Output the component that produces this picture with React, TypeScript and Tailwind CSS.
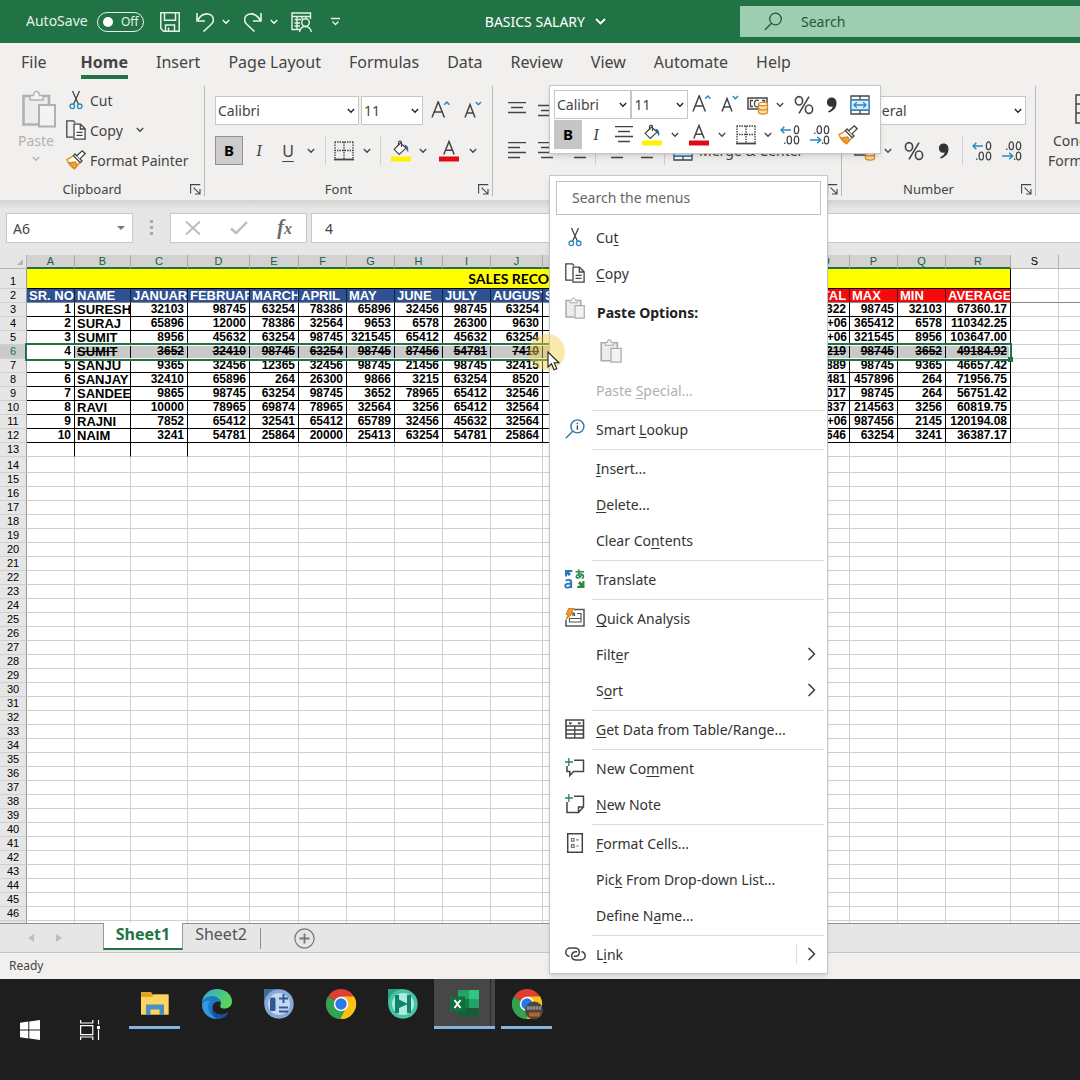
import { Fragment, type ReactNode } from 'react'
import clsx from 'clsx'

/* ---------- Data ---------- */

const TABS = [
  'File',
  'Home',
  'Insert',
  'Page Layout',
  'Formulas',
  'Data',
  'Review',
  'View',
  'Automate',
  'Help',
]

const COLUMNS = [
  { id: 'A', width: 'w-[48px]', title: 'SR. NO' },
  { id: 'B', width: 'w-[56px]', title: 'NAME' },
  { id: 'C', width: 'w-[57px]', title: 'JANUARY' },
  { id: 'D', width: 'w-[62px]', title: 'FEBRUARY' },
  { id: 'E', width: 'w-[49px]', title: 'MARCH' },
  { id: 'F', width: 'w-[48px]', title: 'APRIL' },
  { id: 'G', width: 'w-[48px]', title: 'MAY' },
  { id: 'H', width: 'w-[48px]', title: 'JUNE' },
  { id: 'I', width: 'w-[48px]', title: 'JULY' },
  { id: 'J', width: 'w-[52px]', title: 'AUGUST' },
  { id: 'K', width: 'w-[65px]', title: 'SEPTEMBER' },
  { id: 'L', width: 'w-[65px]', title: 'OCTOBER' },
  { id: 'M', width: 'w-[65px]', title: 'NOVEMBER' },
  { id: 'N', width: 'w-[64px]', title: 'DECEMBER' },
  { id: 'O', width: 'w-[48px]', title: 'TOTAL' },
  { id: 'P', width: 'w-[48px]', title: 'MAX' },
  { id: 'Q', width: 'w-[48px]', title: 'MIN' },
  { id: 'R', width: 'w-[65px]', title: 'AVERAGE' },
]

const EMPTY = ['', '', '', '']

const RECORDS = [
  ['1', 'SURESH', '32103', '98745', '63254', '78386', '65896', '32456', '98745', '63254', ...EMPTY, '808322', '98745', '32103', '67360.17'],
  ['2', 'SURAJ', '65896', '12000', '78386', '32564', '9653', '6578', '26300', '9630', ...EMPTY, '1.3E+06', '365412', '6578', '110342.25'],
  ['3', 'SUMIT', '8956', '45632', '63254', '98745', '321545', '65412', '45632', '63254', ...EMPTY, '1.2E+06', '321545', '8956', '103647.00'],
  ['4', 'SUMIT', '3652', '32410', '98745', '63254', '98745', '87456', '54781', '7410', ...EMPTY, '590219', '98745', '3652', '49184.92'],
  ['5', 'SANJU', '9365', '32456', '12365', '32456', '98745', '21456', '98745', '32415', ...EMPTY, '559889', '98745', '9365', '46657.42'],
  ['6', 'SANJAY', '32410', '65896', '264', '26300', '9866', '3215', '63254', '8520', ...EMPTY, '863481', '457896', '264', '71956.75'],
  ['7', 'SANDEEP', '9865', '98745', '63254', '98745', '3652', '78965', '65412', '32546', ...EMPTY, '681017', '98745', '264', '56751.42'],
  ['8', 'RAVI', '10000', '78965', '69874', '78965', '32564', '3256', '65412', '32564', ...EMPTY, '729837', '214563', '3256', '60819.75'],
  ['9', 'RAJNI', '7852', '65412', '32541', '65412', '65789', '32456', '45632', '32564', ...EMPTY, '1.4E+06', '987456', '2145', '120194.08'],
  ['10', 'NAIM', '3241', '54781', '25864', '20000', '25413', '63254', '54781', '25864', ...EMPTY, '436646', '63254', '3241', '36387.17'],
]

const SELECTED_ROW = 6
const BLANK_ROWS = Array.from({ length: 35 }, (_, i) => i + 13)

type MenuEntry = {
  // label split around its access key
  label: [string, string, string]
  icon?: ReactNode
  submenu?: boolean
  split?: boolean
}

/* ---------- Icons ---------- */

function Chevron({ className = 'text-[#444]' }: { className?: string }) {
  return (
    <svg className={clsx('shrink-0', className)} width="8" height="6" viewBox="0 0 8 6" fill="none" stroke="currentColor" strokeWidth="1.3">
      <path d="M.8 1 4 4.3 7.2 1" />
    </svg>
  )
}

function ChevronRight() {
  return (
    <svg width="9" height="14" viewBox="0 0 9 14" fill="none" stroke="#333" strokeWidth="1.4">
      <path d="M1.5 1 7.5 7l-6 6" />
    </svg>
  )
}

function CutIcon() {
  return (
    <svg width="20" height="20" viewBox="0 0 20 20" fill="none" strokeWidth="1.3">
      <path d="M6.5 1 12.3 14M13.5 1 7.7 14" stroke="#444" />
      <circle cx="6.3" cy="16.3" r="2.3" stroke="#2b88c0" />
      <circle cx="13.7" cy="16.3" r="2.3" stroke="#2b88c0" />
    </svg>
  )
}

function CopyIcon() {
  return (
    <svg width="20" height="20" viewBox="0 0 20 20" fill="none" stroke="#444" strokeWidth="1.3">
      <path d="M7 17.2H.8V.9h6.6l1.8 2" />
      <path d="M8 4.2h6.5l4.6 4.6v10.3H8z" fill="#fbfbfb" />
      <path d="M14.3 4.4v4.6h4.6M10.6 12.4h6M10.6 15.4h6" />
    </svg>
  )
}

function PasteIcon({ className }: { className: string }) {
  return (
    <svg className={className} viewBox="0 0 34 38" fill="none" stroke="currentColor" strokeWidth="1.6">
      <path d="M27 14V6H1.500v28.500H16V14z" fill="#ececec" stroke="none" />
      <path d="M8 6H1.500v28.500H16M20 6h7v8" strokeWidth="2.600" />
      <path d="M8 10V5.500h3.500C11.500 3 13 1.200 14.500 1.200S17.500 3 17.500 5.500H21V10z" fill="#f4f4f4" />
      <path d="M17 15h16v21.500H17z" fill="#f3f3f3" strokeWidth="2" />
    </svg>
  )
}

function PainterIcon() {
  return (
    <svg width="20" height="20" viewBox="0 0 20 20" fill="none" strokeWidth="1.3">
      <path d="M1 9.600 7.800 5.800l6.300 6.400L8.600 18.800C5 17 2.500 13.500 1 9.600z" fill="#fff" stroke="#dd8a1f" />
      <path d="m2.600 13 7-1 1.800 3.400-3 3.200z" fill="#eda13b" stroke="#dd8a1f" />
      <path d="M7.300 5.600 9 4l7 7-1.700 1.600z" fill="#fff" stroke="#444" />
      <path d="m10.800 5.800 5.500-5 2.900 2.900-5.300 5.200" fill="#fff" stroke="#444" />
    </svg>
  )
}

function BordersIcon() {
  return (
    <svg width="20" height="20" viewBox="0 0 20 20" fill="none" stroke="#444">
      <path d="M.5 1h19M.5 9.500h19M1 1v17M10 1v17M19 1v17" strokeDasharray="1.500 1" strokeWidth="1.300" />
      <path d="M0 18.500h20" strokeWidth="1.800" />
    </svg>
  )
}

function FillIcon() {
  return (
    <svg width="20" height="22" viewBox="0 0 20 22" fill="none">
      <path d="M9.500 3 3.200 9.300l5 5.200 6.800-6.400z" fill="#fff" stroke="#444" strokeWidth="1.200" />
      <path d="M7.500 6V2.800C7.500.6 10.500.6 10.500 2.800V7" stroke="#444" strokeWidth="1.200" />
      <path d="M13 4.800c3.500.2 4.800 2.600 4.200 7.200-1.400-.8-1.800-3.300-2.400-4.300z" fill="#2f5f9e" />
      <path d="M0 16.500h20v5H0z" fill="#fff200" />
    </svg>
  )
}

function FontColorIcon() {
  return (
    <svg width="20" height="22" viewBox="0 0 20 22" fill="none">
      <path d="m4.800 14.500 5.200-13 5.200 13M6.600 10.200h6.800" stroke="#444" strokeWidth="1.500" />
      <path d="M0 16.500h20v5H0z" fill="#e00b12" />
    </svg>
  )
}

function FontSizeIcon({ grow }: { grow?: boolean }) {
  return grow ? (
    <svg width="20" height="20" viewBox="0 0 20 20" fill="none">
      <path d="M1 16.500 7.200.8 13.400 16.500M3.200 11h8" stroke="#444" strokeWidth="1.500" />
      <path d="m13.200 3.800 2.600-2.700 2.600 2.700" stroke="#2b88c0" strokeWidth="1.500" />
    </svg>
  ) : (
    <svg width="20" height="20" viewBox="0 0 20 20" fill="none">
      <path d="M2 16.500 7 3.500l5 13M3.800 12h6.400" stroke="#444" strokeWidth="1.500" />
      <path d="m12.800 1 2.600 2.700L18 1" stroke="#2b88c0" strokeWidth="1.500" />
    </svg>
  )
}

function AlignIcon({ lines }: { lines: string }) {
  return (
    <svg width="18" height="18" viewBox="0 0 18 18" fill="none" stroke="#444" strokeWidth="1.300">
      <path d={lines} />
    </svg>
  )
}

const ALIGN_TOP = 'M0 .7h18M3 5.500h12M0 10.500h18'
const ALIGN_MIDDLE = 'M0 3.500h18M3 8.500h12M0 13.500h18'
const ALIGN_LEFT = 'M0 .7h18M0 5.500h12M0 10.500h18M0 15.500h12'
const ALIGN_CENTER = 'M0 .7h18M3 5.500h12M0 10.500h18M3 15.500h12'
const ALIGN_RIGHT = 'M0 .7h18M6 5.500h12M0 10.500h18M6 15.500h12'

function MoneyIcon() {
  return (
    <svg width="22" height="20" viewBox="0 0 22 20" fill="none">
      <path d="M1 3h19v11H1z" stroke="#444" strokeWidth="1.500" fill="#fff" />
      <path d="M6 5.500H3.500v6H6M12 5.500C8.500 4.500 7.500 6 7.500 8.500s1 4 3.500 3.200M15 5.500h2.500V8" stroke="#444" strokeWidth="1.300" />
      <path d="M11.500 9v8.300c0 2.300 9 2.300 9 0V9z" fill="#fbdcb0" stroke="#dd8a1f" strokeWidth="1.300" />
      <ellipse cx="16" cy="9" rx="4.500" ry="1.700" fill="#fff" stroke="#dd8a1f" strokeWidth="1.300" />
      <path d="M11.500 13.200c0 2.300 9 2.300 9 0" stroke="#dd8a1f" strokeWidth="1.300" />
    </svg>
  )
}

function PercentIcon() {
  return (
    <svg width="20" height="20" viewBox="0 0 20 20" fill="none" stroke="#444" strokeWidth="1.600">
      <ellipse cx="5" cy="5.800" rx="3.600" ry="4.200" />
      <ellipse cx="15" cy="14.200" rx="3.600" ry="4.200" />
      <path d="M15 1.600 5 18.400" />
    </svg>
  )
}

function CommaIcon() {
  return (
    <svg width="12" height="18" viewBox="0 0 12 18">
      <path d="M5.600 1.500c3 0 4.900 2.100 4.900 5.400 0 4.600-2.800 8-7.800 9.600l-.6-1.300c2.700-1.100 4.200-2.700 4.600-4.700-3.500.7-5.800-1.200-5.800-4.300 0-2.700 2-4.700 4.700-4.700z" fill="#333" />
    </svg>
  )
}

function DecimalIcon({ increase }: { increase?: boolean }) {
  return (
    <svg width="20" height="20" viewBox="0 0 20 20" fill="none" stroke="#444" strokeWidth="1.300">
      {increase ? (
        <>
          <ellipse cx="16.500" cy="4.800" rx="2.200" ry="3.900" />
          <ellipse cx="9.300" cy="15" rx="2.200" ry="3.900" />
          <ellipse cx="16.500" cy="15" rx="2.200" ry="3.900" />
          <path d="M4.800 17.600v1.400" />
          <path d="M11 5H1M4.300 1.800 1 5l3.300 3.200" stroke="#2b88c0" strokeWidth="1.500" />
        </>
      ) : (
        <>
          <ellipse cx="9.300" cy="4.800" rx="2.200" ry="3.900" />
          <ellipse cx="16.500" cy="4.800" rx="2.200" ry="3.900" />
          <ellipse cx="16.500" cy="15" rx="2.200" ry="3.900" />
          <path d="M4.800 7.600V9M12.600 17.600v1.400" />
          <path d="M0 15h10.500M7.300 11.800l3.300 3.200-3.300 3.200" stroke="#2b88c0" strokeWidth="1.500" />
        </>
      )}
    </svg>
  )
}

function MergeIcon() {
  return (
    <svg width="20" height="20" viewBox="0 0 20 20" fill="none" stroke="#444" strokeWidth="1.300">
      <path d="M1 1h18v18H1z" fill="#fff" />
      <path d="M1 5h18M1 15h18M10 1v4M10 15v4" />
      <path d="M1 5h18v10H1z" stroke="#2b88c0" fill="#dcecf7" />
      <path d="M4 10h12M6.800 7.200 4 10l2.800 2.800M13.200 7.200 16 10l-2.800 2.800" stroke="#2b88c0" />
    </svg>
  )
}

function LauncherIcon() {
  return (
    <svg width="11" height="11" viewBox="0 0 11 11" fill="none" stroke="#444" strokeWidth="1.100">
      <path d="M.6 9.500V.6h9.600M3.600 3.600l6 6M10 5v5H5" />
    </svg>
  )
}

function LookupIcon() {
  return (
    <svg width="20" height="20" viewBox="0 0 20 20" fill="none" stroke="#2b78a8" strokeWidth="1.400">
      <circle cx="12.400" cy="7.400" r="6.500" />
      <path d="M7.700 12.200.8 19.200" />
      <path d="M12.400 6.500v4.300M12.400 3.700v1.500" stroke="#444" />
    </svg>
  )
}

function TranslateIcon() {
  return (
    <svg width="22" height="20" viewBox="0 0 22 20" fill="none">
      <path d="M1 1v6.500h2V5.200L5 7l2-2-2-2h3.300V1z" fill="#2b78b8" />
      <path d="M1.800 11.800c1.800-1.400 5.400-1.300 5.400 1.400V19M7.200 14.500c-3.500 0-6 .2-6 2.200 0 2.600 4.600 2.600 6-.2" stroke="#2b78b8" strokeWidth="1.900" />
      <path d="M11.500 2.800h8.500M14.800.3c-.4 3.500-.2 6 .8 8.700M18 4.500c-1 3-3 4.800-4.800 4.500-2.300-.6-.2-4.100 3.200-3.900 3.900.2 3.800 3.800 1.200 4.400" stroke="#2a8a3e" strokeWidth="1.500" />
      <path d="M20.500 19v-7h-2.200v2.500L16 12.300l-2 2 2.300 2.500h-3V19z" fill="#2a8a3e" />
    </svg>
  )
}

function AnalysisIcon() {
  return (
    <svg width="20" height="20" viewBox="0 0 20 20" fill="none">
      <path d="M9 1.500h10V18H1v-6" stroke="#555" strokeWidth="1.500" />
      <path d="M8 8V5.500h1.500V8M4.500 10.500H16V14H4.500zM12 5.500h4v5" stroke="#555" strokeWidth="1.200" />
      <path d="M3.500.5H9L6.500 4.500h2.300L1 11.500 3.200 6.500H1z" fill="#ee9a35" stroke="#c96f12" strokeWidth=".8" />
    </svg>
  )
}

function TableDataIcon() {
  return (
    <svg width="20" height="20" viewBox="0 0 20 20" fill="none" stroke="#444" strokeWidth="1.300">
      <path d="M1 1h17.500v18H1z" strokeWidth="1.600" />
      <path d="M1 7h17.500M1 11h17.500M1 15h17.500M9.800 7v12" />
      <path d="m4 3.500 1.300 1.300L6.600 3.500M13 3.500l1.300 1.300 1.300-1.300" />
    </svg>
  )
}

function CommentIcon() {
  return (
    <svg width="20" height="20" viewBox="0 0 20 20" fill="none" stroke="#444" strokeWidth="1.500">
      <path d="M9 2.200h9.500v11.300H8.500l-3.700 4v-4H2V8" />
      <path d="M3.800 0v8M0 4h8" stroke="#2f7f6a" strokeWidth="1.300" />
    </svg>
  )
}

function NoteIcon() {
  return (
    <svg width="20" height="20" viewBox="0 0 20 20" fill="none" stroke="#444" strokeWidth="1.500">
      <path d="M9 2.200h9.500V13l-5 5.500H2V8M18.500 13h-5v5.500" />
      <path d="M3.800 0v8M0 4h8" stroke="#2f7f6a" strokeWidth="1.300" />
    </svg>
  )
}

function FormatCellsIcon() {
  return (
    <svg width="20" height="20" viewBox="0 0 20 20" fill="none" stroke="#444" strokeWidth="1.500">
      <path d="M2.700.7h14.600v18.600H2.700z" />
      <path d="M6.500 5.500h2.600v2.600H6.500zM6.500 11.700h2.600v2.600H6.500zM11.200 6.800h2.600M11.200 13h2.600" stroke="#777" strokeWidth="1.200" />
    </svg>
  )
}

function LinkIcon() {
  return (
    <svg width="21" height="16" viewBox="0 0 21 16" fill="none" stroke="#444" strokeWidth="1.500">
      <path d="M4.500 10.500C2.300 9.800.8 8.300.8 6.200.8 3.800 2.800 2 5.500 2h4c2.800 0 4.800 1.700 4.800 4.200 0 2.400-1.800 4-4 4H8.800" />
      <path d="M16.500 5.500c2.200.7 3.700 2.200 3.700 4.300 0 2.400-2 4.200-4.700 4.200h-4c-2.800 0-4.800-1.700-4.800-4.200 0-2.400 1.800-4 4-4h1.500" />
    </svg>
  )
}

function ChromeIcon({ badge }: { badge?: boolean }) {
  return (
    <svg width="32" height="32" viewBox="0 0 32 32">
      <path d="M16 16 3 8.500A15 15 0 0 1 29 8.500z" fill="#df3e32" />
      <path d="M16 16 29 8.500A15 15 0 0 1 16 31z" fill="#fbc116" />
      <path d="M16 16v15A15 15 0 0 1 3 8.500z" fill="#33a350" />
      <path d="M16 8.500h13A15 15 0 0 1 15.500 31l7-11.500z" fill="#fbc116" />
      <path d="m3 8.500 7 12 6 2.200 4-1L15.500 31A15 15 0 0 1 3 8.500z" fill="#33a350" />
      <circle cx="16" cy="16" r="7.200" fill="#fff" />
      <circle cx="16" cy="16" r="5.700" fill="#2d76ea" />
      {badge && (
        <>
          <circle cx="23" cy="22.500" r="9" fill="#4a4646" />
          <path d="M16 20h14" stroke="#8d8d8d" strokeWidth="3.500" strokeDasharray="2.500 .5" />
          <path d="M18 24.500h11v4H18z" fill="#b5651f" />
        </>
      )}
    </svg>
  )
}

/* ---------- Title bar ---------- */

function TitleBar() {
  return (
    <header className="flex h-[43px] shrink-0 items-center bg-[#217346] text-[14px] text-[#e3f3e8]">
      <div className="flex w-[740px] shrink-0 items-center">
        <span className="ml-[26px] w-[71px] pb-[2px]">AutoSave</span>
        <button className="flex h-5 w-[47px] items-center gap-2 rounded-full border border-white/90 pl-[5px] text-[12px]">
          <span className="size-[10px] rounded-full bg-white" />
          Off
        </button>
        <button aria-label="Save" className="ml-4">
          <svg width="20" height="20" viewBox="0 0 20 20" fill="none" stroke="currentColor" strokeWidth="1.500">
            <path d="M.8.8h18.400v18.400H3.500L.8 16.500zM4.500.8v7.500h11V.8M5.500 19v-6h9v6M8.500 15.500V19" />
          </svg>
        </button>
        <button aria-label="Undo" className="ml-4">
          <svg width="18" height="20" viewBox="0 0 18 20" fill="none" stroke="currentColor" strokeWidth="1.600">
            <path d="M1 1v8h8M1.300 8.800C4 4 8 1.500 12 2c5.500.8 7 6.500 3.500 10L7.500 19.500" />
          </svg>
        </button>
        <button aria-label="Undo list" className="ml-2">
          <Chevron className="text-white" />
        </button>
        <button aria-label="Redo" className="ml-[14px]">
          <svg width="18" height="20" viewBox="0 0 18 20" fill="none" stroke="currentColor" strokeWidth="1.600">
            <path d="M17 1v8H9M16.700 8.800C14 4 10 1.500 6 2 .5 2.800-1 8.500 2.500 12l8 7.500" />
          </svg>
        </button>
        <button aria-label="Redo list" className="ml-2">
          <Chevron className="text-white" />
        </button>
        <button aria-label="Table view" className="ml-[13px]">
          <svg width="22" height="22" viewBox="0 0 22 22" fill="none" stroke="currentColor" strokeWidth="1.400">
            <path d="M9 18.500H1V2h18.500v6M1 5.500h18.500M3.500 8.500H10M3.500 12H9M3.500 15H9M6 5.500v13M11 5.500v3M15 5.500v2" />
            <circle cx="14.500" cy="11.500" r="3.800" />
            <path d="M8.500 21c.5-3.500 3-5.500 6-5.500s5 2 6 5.500" />
          </svg>
        </button>
        <button aria-label="Customize toolbar" className="ml-[17px]">
          <svg width="11" height="10" viewBox="0 0 11 10" fill="none" stroke="currentColor" strokeWidth="1.300">
            <path d="M1 1.500h9M2.500 4.500l3 3 3-3" />
          </svg>
        </button>
        <button className="mr-[134px] ml-auto flex items-center gap-[10px] text-white">
          BASICS SALARY
          <svg width="11" height="7" viewBox="0 0 11 7" fill="none" stroke="currentColor" strokeWidth="1.800">
            <path d="m1 1 4.500 4.500L10 1" />
          </svg>
        </button>
      </div>
      <label className="flex h-[31px] flex-1 items-center bg-[#9fcdb1] pl-6 text-[#1c5c38]">
        <svg className="shrink-0" width="19" height="19" viewBox="0 0 19 19" fill="none" stroke="currentColor" strokeWidth="1.300">
          <circle cx="11.500" cy="7" r="5.800" />
          <path d="M7.500 11.200.8 18" />
        </svg>
        <input
          aria-label="Search"
          placeholder="Search"
          className="ml-[18px] w-full bg-transparent outline-none placeholder:text-[#1c5c38]"
        />
      </label>
    </header>
  )
}

/* ---------- Ribbon ---------- */

function RibbonTabs() {
  return (
    <nav className="flex h-9 shrink-0 gap-7 pl-[21px] text-[16px] text-[#444]">
      {TABS.map((tab) => (
        <button
          key={tab}
          className={clsx(
            'h-9 border-b-4 pt-[5px] whitespace-nowrap',
            tab === 'Home' ? 'border-[#217346] font-bold' : 'border-transparent',
            tab === 'File' && 'mr-[6px]',
          )}
        >
          {tab}
        </button>
      ))}
    </nav>
  )
}

function Group({ label, className, children }: { label: string; className?: string; children: ReactNode }) {
  return (
    <section className={clsx('relative flex shrink-0 flex-col border-r border-[#b8b8b8]', className)}>
      {children}
      <div className="mt-auto pr-5 text-center text-[13px] leading-[13px]">{label}</div>
      <button aria-label={`${label} settings`} className="absolute right-[3px] bottom-px">
        <LauncherIcon />
      </button>
    </section>
  )
}

function ComboBox({ label, value, className }: { label: string; value: string; className: string }) {
  return (
    <div className={clsx('relative h-[29px] border border-[#c6c6c6] bg-white', className)}>
      <select aria-label={label} className="h-full w-full appearance-none pl-[2px] text-[14px] text-[#444] outline-none">
        <option>{value}</option>
      </select>
      <span className="pointer-events-none absolute top-[11px] right-[3px]">
        <Chevron className="text-[#222]" />
      </span>
    </div>
  )
}

function Tool({ label, className, children }: { label: string; className: string; children: ReactNode }) {
  return (
    <button aria-label={label} className={clsx('flex h-[29px] shrink-0 items-center justify-center', className)}>
      {children}
    </button>
  )
}

function Divider() {
  return <span className="mx-1 h-[29px] w-px bg-[#d0d0d0]" />
}

function Ribbon() {
  return (
    <div className="flex h-[121px] shrink-0 overflow-hidden pt-[7px] pb-[4px] text-[14px] text-[#444]">
      <Group label="Clipboard" className="w-[205px]">
        <div className="flex">
          <button className="ml-4 flex w-10 flex-col items-center text-[#b1b1b1]">
            <PasteIcon className="mt-1 ml-[5px] h-[38px] w-[34px]" />
            <span className="mt-[3px] leading-[19px]">Paste</span>
            <Chevron className="mt-[6px] text-[#b1b1b1]" />
          </button>
          <div className="ml-[10px] flex flex-col">
            <button className="flex h-[30px] items-center gap-1 pb-[2px]">
              <CutIcon /> Cut
            </button>
            <button className="flex h-[30px] items-center gap-1 pb-[2px]">
              <CopyIcon /> Copy <Chevron className="ml-[9px] text-[#444]" />
            </button>
            <button className="flex h-[30px] items-center gap-1 pb-[2px] whitespace-nowrap">
              <PainterIcon /> Format Painter
            </button>
          </div>
        </div>
      </Group>

      <Group label="Font" className="w-[288px]">
        <div className="flex pt-[10px] pl-[10px]">
          <ComboBox label="Font" value="Calibri" className="w-[144px]" />
          <ComboBox label="Font size" value="11" className="ml-[2px] w-[62px]" />
          <Tool label="Increase font size" className="ml-[2px] w-8">
            <FontSizeIcon grow />
          </Tool>
          <Tool label="Decrease font size" className="w-8">
            <FontSizeIcon />
          </Tool>
        </div>
        <div className="flex pt-[11px] pl-[10px]">
          <Tool label="Bold" className="w-7 border border-[#919191] bg-[#cdcccb] text-[15px] font-bold text-black">
            B
          </Tool>
          <Tool label="Italic" className="w-8 font-serif text-[17px] italic">
            I
          </Tool>
          <Tool label="Underline" className="w-[26px] text-[16px] underline underline-offset-4">
            U
          </Tool>
          <Tool label="Underline style" className="w-5">
            <Chevron />
          </Tool>
          <Divider />
          <Tool label="Borders" className="w-7">
            <BordersIcon />
          </Tool>
          <Tool label="Border style" className="w-[18px]">
            <Chevron />
          </Tool>
          <Divider />
          <Tool label="Fill color" className="w-8">
            <FillIcon />
          </Tool>
          <Tool label="Fill color list" className="w-3">
            <Chevron />
          </Tool>
          <Tool label="Font color" className="w-10">
            <FontColorIcon />
          </Tool>
          <Tool label="Font color list" className="w-2">
            <Chevron />
          </Tool>
        </div>
      </Group>

      <Group label="Alignment" className="w-[349px]">
        <div className="flex pt-[10px] pl-[10px]">
          <Tool label="Top align" className="w-7">
            <AlignIcon lines={ALIGN_TOP} />
          </Tool>
          <Tool label="Middle align" className="w-8">
            <AlignIcon lines={ALIGN_MIDDLE} />
          </Tool>
        </div>
        <div className="flex pt-[11px] pl-[10px]">
          <Tool label="Align left" className="w-7">
            <AlignIcon lines={ALIGN_LEFT} />
          </Tool>
          <Tool label="Center" className="w-8">
            <AlignIcon lines={ALIGN_CENTER} />
          </Tool>
          <Tool label="Align right" className="w-7">
            <AlignIcon lines={ALIGN_RIGHT} />
          </Tool>
          <Divider />
          <Tool label="Decrease indent" className="w-7">
            <AlignIcon lines={ALIGN_RIGHT} />
          </Tool>
          <Tool label="Increase indent" className="w-8">
            <AlignIcon lines={ALIGN_RIGHT} />
          </Tool>
          <Divider />
          <button className="flex h-[29px] items-center gap-[6px] pl-1 whitespace-nowrap">
            <MergeIcon /> Merge &amp; Center
          </button>
        </div>
      </Group>

      <Group label="Number" className="w-[194px]">
        <div className="flex pt-[10px] pl-[10px]">
          <ComboBox label="Number format" value="General" className="w-[174px]" />
        </div>
        <div className="flex pt-[11px] pl-[10px]">
          <Tool label="Accounting format" className="w-[26px]">
            <MoneyIcon />
          </Tool>
          <Tool label="Accounting format list" className="w-5">
            <Chevron />
          </Tool>
          <Tool label="Percent style" className="w-8">
            <PercentIcon />
          </Tool>
          <Tool label="Comma style" className="w-7">
            <CommaIcon />
          </Tool>
          <Divider />
          <Tool label="Increase decimal" className="w-[30px]">
            <DecimalIcon increase />
          </Tool>
          <Tool label="Decrease decimal" className="w-[30px]">
            <DecimalIcon />
          </Tool>
        </div>
      </Group>

      <button className="ml-3 flex shrink-0 flex-col items-center pt-2 leading-5 whitespace-nowrap">
        <svg width="32" height="30" viewBox="0 0 32 30" fill="none" stroke="#444" strokeWidth="1.500">
          <path d="M1 1h30v28H1zM1 10h30M1 19h30M11 1v28" />
        </svg>
        <span className="mt-[7px]">Conditional</span>
        <span className="flex items-center gap-1">
          Formatting <Chevron />
        </span>
      </button>
    </div>
  )
}

function FormulaBar() {
  return (
    <div className="flex h-[55px] shrink-0 items-end bg-linear-to-b from-[#d3d3d1] from-0% to-[#e6e6e6] to-15% pb-3 text-[14px] text-[#444]">
      <label className="relative ml-[6px] h-[30px] w-[127px] border border-[#c8c8c8] bg-white">
        <input aria-label="Name box" defaultValue="A6" className="h-full w-full px-[6px] outline-none" />
        <span className="absolute top-3 right-[7px] border-x-4 border-t-4 border-x-transparent border-t-[#777]" />
      </label>
      <span className="mx-[17px] mb-2 flex flex-col gap-[3px]">
        <i className="size-[3px] bg-[#a8a8a8]" />
        <i className="size-[3px] bg-[#a8a8a8]" />
        <i className="size-[3px] bg-[#a8a8a8]" />
      </span>
      <div className="flex h-[30px] w-[137px] items-center justify-between border border-[#c8c8c8] bg-white px-[14px]">
        <button aria-label="Cancel">
          <svg width="16" height="14" viewBox="0 0 16 14" fill="none" stroke="#b9b9b9" strokeWidth="1.800">
            <path d="M1 .5 15 13.500M15 .5 1 13.500" />
          </svg>
        </button>
        <button aria-label="Enter">
          <svg width="18" height="14" viewBox="0 0 18 14" fill="none" stroke="#bdbdbd" strokeWidth="2.400">
            <path d="m1 7.500 5 4.500L17 1" />
          </svg>
        </button>
        <button className="font-['Liberation_Serif',serif] text-[20px] leading-6 font-bold text-[#6a6a6a] italic">
          f<span className="text-[16px]">x</span>
        </button>
      </div>
      <input
        aria-label="Formula"
        defaultValue="4"
        className="ml-1 h-[30px] flex-1 border border-r-0 border-[#c8c8c8] bg-white pl-[13px] outline-none"
      />
    </div>
  )
}

/* ---------- Worksheet ---------- */

const ROW_HEAD = 'border-r border-b border-r-[#9a9a9a] border-b-[#cfcfcf] p-0 text-center align-bottom text-[11px] leading-[13px] font-normal'

function Sheet() {
  return (
    <main className="min-h-0 flex-1 overflow-hidden bg-white">
      <table className="w-full table-fixed border-separate border-spacing-0 font-['Liberation_Sans',sans-serif] text-black">
        <colgroup>
          <col className="w-[27px]" />
          {COLUMNS.map((col) => (
            <col key={col.id} className={col.width} />
          ))}
          <col className="w-[48px]" />
          <col />
        </colgroup>
        <thead>
          <tr className="bg-[#e6e6e6] text-[11px] leading-[12px]">
            <th className="h-[14px] border-r border-b border-[#b5b5b5] p-0">
              <span className="mr-[3px] ml-auto block w-0 border-b-[6px] border-l-[6px] border-b-[#b5b5b5] border-l-transparent" />
            </th>
            {COLUMNS.map((col) => (
              <th key={col.id} className="h-[14px] border-r border-b-2 border-r-[#aaa] border-b-[#217346] bg-[#d2d2d2] p-0 font-normal text-[#22593f]">
                {col.id}
              </th>
            ))}
            <th className="h-[14px] border-r border-b border-[#b0b0b0] p-0 align-top font-normal">S</th>
            <th className="h-[14px] border-b border-[#b0b0b0] p-0 font-normal" />
          </tr>
        </thead>
        <tbody>
          <tr>
            <th className={clsx(ROW_HEAD, 'h-5 bg-[#e6e6e6]')}>1</th>
            <td colSpan={18} className="h-5 border-r border-b border-black bg-[#ffff00] p-0 text-center font-['Lato',sans-serif] text-[14px] leading-[19px] font-bold">
              SALES RECORD
            </td>
            <td className="border-r border-b border-[#cfcfcf] p-0" />
            <td className="border-b border-[#cfcfcf] p-0" />
          </tr>
          <tr>
            <th className={clsx(ROW_HEAD, 'h-[14px] bg-[#e6e6e6]')}>2</th>
            {COLUMNS.map((col, i) => (
              <td
                key={col.id}
                className={clsx(
                  'overflow-hidden border-r border-b border-r-black/60 border-b-[#888] p-0 pl-[2px] text-[13px] leading-[13px] font-bold whitespace-nowrap text-white',
                  i < 14 ? 'bg-[#2f5191]' : 'bg-[#f40a0a]',
                )}
              >
                {col.title}
              </td>
            ))}
            <td className="border-r border-b border-r-[#cfcfcf] border-b-[#888] p-0" />
            <td className="border-b border-[#888] p-0" />
          </tr>
          {RECORDS.map((record, r) => {
            const row = r + 3
            const selected = row === SELECTED_ROW
            return (
              <tr key={row}>
                <th className={clsx(ROW_HEAD, 'h-[14px]', selected ? 'bg-[#cacaca] text-[#217346]' : 'bg-[#e6e6e6]')}>{row}</th>
                {record.map((value, i) => (
                  <td
                    key={COLUMNS[i].id}
                    className={clsx(
                      'border-r border-b border-black p-0 leading-[13px] font-bold whitespace-nowrap',
                      i === 1 ? 'pl-[2px] text-[13px]' : 'pr-[3px] text-right text-[12px]',
                      selected && i === 0 ? 'relative' : 'overflow-hidden',
                      selected && i > 0 && 'bg-[#c9c9c9] line-through',
                    )}
                  >
                    {value}
                    {selected && i === 0 && (
                      <span className="absolute -top-[2px] -left-[2px] z-10 h-[18px] w-[987px] border-2 border-[#217346] inset-ring inset-ring-white">
                        <span className="absolute -right-[3px] -bottom-[3px] size-[5px] bg-[#217346]" />
                      </span>
                    )}
                  </td>
                ))}
                <td className="border-r border-b border-[#cfcfcf] p-0" />
                <td className="border-b border-[#cfcfcf] p-0" />
              </tr>
            )
          })}
          {BLANK_ROWS.map((row) => (
            <tr key={row}>
              <th className={clsx(ROW_HEAD, 'bg-[#e6e6e6]', row === 14 ? 'h-4' : 'h-[14px]')}>{row}</th>
              {COLUMNS.map((col, i) => (
                <td
                  key={col.id}
                  className={clsx('border-r border-b border-b-[#cfcfcf] p-0', row === 13 && i < 3 ? 'border-r-black' : 'border-r-[#cfcfcf]')}
                />
              ))}
              <td className="border-r border-b border-[#cfcfcf] p-0" />
              <td className="border-b border-[#cfcfcf] p-0" />
            </tr>
          ))}
        </tbody>
      </table>
    </main>
  )
}

function SheetTabs() {
  return (
    <div className="flex h-[30px] shrink-0 border-t border-b border-t-[#8f8f8f] border-b-[#c4c4c4] bg-[#e6e6e6] text-[16px] leading-5 text-[#555]">
      <div className="flex w-[103px] items-center gap-[22px] pl-7">
        <button aria-label="Previous sheet" className="border-y-4 border-r-[6px] border-y-transparent border-r-[#bdbdbd]" />
        <button aria-label="Next sheet" className="border-y-4 border-l-[6px] border-y-transparent border-l-[#bdbdbd]" />
      </div>
      <button className="-mt-px h-[27px] w-20 border-x border-b-2 border-x-[#9a9a9a] border-b-[#217346] bg-white pb-1 font-bold text-[#217346]">
        Sheet1
      </button>
      <button className="h-5 w-[76px]">Sheet2</button>
      <span className="mt-1 ml-px h-[21px] w-px bg-[#8f8f8f]" />
      <button aria-label="New sheet" className="mt-1 ml-[33px] self-start">
        <svg width="21" height="21" viewBox="0 0 21 21" fill="none" stroke="#777" strokeWidth="1.200">
          <circle cx="10.500" cy="10.500" r="9.600" />
          <path d="M5.500 10.500h10M10.500 5.500v10" strokeWidth="1.800" />
        </svg>
      </button>
    </div>
  )
}

/* ---------- Floating mini toolbar and context menu ---------- */

function MiniToolbar() {
  return (
    <div className="absolute top-[85px] left-[549px] z-20 w-[332px] border border-[#c6c6c6] bg-white p-1 shadow-md">
      <div className="flex">
        <ComboBox label="Font" value="Calibri" className="w-[78px]" />
        <ComboBox label="Font size" value="11" className="w-[57px]" />
        <Tool label="Increase font size" className="w-7">
          <FontSizeIcon grow />
        </Tool>
        <Tool label="Decrease font size" className="w-7">
          <FontSizeIcon />
        </Tool>
        <Tool label="Accounting format" className="w-7">
          <MoneyIcon />
        </Tool>
        <Tool label="Accounting format list" className="w-4">
          <Chevron />
        </Tool>
        <Tool label="Percent style" className="w-8">
          <PercentIcon />
        </Tool>
        <Tool label="Comma style" className="w-6">
          <CommaIcon />
        </Tool>
        <Tool label="Merge and center" className="w-8">
          <MergeIcon />
        </Tool>
      </div>
      <div className="flex pt-px">
        <Tool label="Bold" className="w-7 bg-[#c6c6c6] text-[15px] font-bold text-black">
          B
        </Tool>
        <Tool label="Italic" className="w-7 font-serif text-[17px] text-[#444] italic">
          I
        </Tool>
        <Tool label="Center" className="w-7">
          <AlignIcon lines={ALIGN_CENTER} />
        </Tool>
        <Tool label="Fill color" className="w-7">
          <FillIcon />
        </Tool>
        <Tool label="Fill color list" className="w-[18px]">
          <Chevron />
        </Tool>
        <Tool label="Font color" className="w-[30px]">
          <FontColorIcon />
        </Tool>
        <Tool label="Font color list" className="w-4">
          <Chevron />
        </Tool>
        <Tool label="Borders" className="w-8">
          <BordersIcon />
        </Tool>
        <Tool label="Border style" className="w-3">
          <Chevron />
        </Tool>
        <Tool label="Increase decimal" className="w-8">
          <DecimalIcon increase />
        </Tool>
        <Tool label="Decrease decimal" className="w-7">
          <DecimalIcon />
        </Tool>
        <Tool label="Format painter" className="w-7">
          <PainterIcon />
        </Tool>
      </div>
    </div>
  )
}

const EDIT_ITEMS: MenuEntry[] = [
  { label: ['Cu', 't', ''], icon: <CutIcon /> },
  { label: ['', 'C', 'opy'], icon: <CopyIcon /> },
]

const MENU_SECTIONS: MenuEntry[][] = [
  [{ label: ['Smart ', 'L', 'ookup'], icon: <LookupIcon /> }],
  [{ label: ['', 'I', 'nsert...'] }, { label: ['', 'D', 'elete...'] }, { label: ['Clear Co', 'n', 'tents'] }],
  [{ label: ['Translate', '', ''], icon: <TranslateIcon /> }],
  [
    { label: ['', 'Q', 'uick Analysis'], icon: <AnalysisIcon /> },
    { label: ['Filt', 'e', 'r'], submenu: true },
    { label: ['S', 'o', 'rt'], submenu: true },
  ],
  [{ label: ['', 'G', 'et Data from Table/Range...'], icon: <TableDataIcon /> }],
  [
    { label: ['New Co', 'm', 'ment'], icon: <CommentIcon /> },
    { label: ['', 'N', 'ew Note'], icon: <NoteIcon /> },
  ],
  [
    { label: ['', 'F', 'ormat Cells...'], icon: <FormatCellsIcon /> },
    { label: ['Pic', 'k', ' From Drop-down List...'] },
    { label: ['Define N', 'a', 'me...'] },
  ],
  [{ label: ['L', 'i', 'nk'], icon: <LinkIcon />, submenu: true, split: true }],
]

function MenuItem({ label, icon, submenu, split }: MenuEntry) {
  return (
    <button className="flex h-9 w-full items-center pr-[11px] pb-[3px] pl-[14px] text-left">
      <span className="flex w-[22px] justify-center">{icon}</span>
      <span className="ml-[10px] flex-1 pt-[2px] whitespace-pre">
        {label[0]}
        <span className="underline underline-offset-2">{label[1]}</span>
        {label[2]}
      </span>
      {split && <span className="mr-[10px] h-5 w-px bg-[#ddd]" />}
      {submenu && <ChevronRight />}
    </button>
  )
}

function ContextMenu() {
  return (
    <div className="absolute top-[175px] left-[549px] z-20 w-[279px] border border-[#c6c6c6] bg-white text-[14px] text-[#333] shadow-md">
      <input
        aria-label="Search the menus"
        placeholder="Search the menus"
        className="mx-[6px] my-[5px] block h-[34px] w-[265px] border border-[#c0c0c0] pb-[2px] pl-[15px] outline-none placeholder:text-[#666]"
      />
      {EDIT_ITEMS.map((item) => (
        <MenuItem key={item.label.join('')} {...item} />
      ))}
      <div className="mt-[3px] flex h-9 items-center pb-[2px] pl-[15px] font-bold text-[#222]">
        <PasteIcon className="mb-2 h-[22px] w-5 text-[#aaa]" />
        <span className="ml-3">Paste Options:</span>
      </div>
      <button aria-label="Paste" className="ml-[50px] flex h-[42px] items-center pb-[2px] text-[#aaa]">
        <PasteIcon className="h-6 w-[22px]" />
      </button>
      <button className="flex h-9 w-full items-center pb-px pl-[46px] text-[#b1b1b1]">
        <span>
          Paste <span className="underline underline-offset-2">S</span>pecial...
        </span>
      </button>
      {MENU_SECTIONS.map((items, i) => (
        <Fragment key={i}>
          <hr className="my-px mr-[3px] ml-[42px] border-[#dcdcdc]" />
          {items.map((item) => (
            <MenuItem key={item.label.join('')} {...item} />
          ))}
        </Fragment>
      ))}
    </div>
  )
}

function Pointer() {
  return (
    <div className="pointer-events-none absolute top-[334px] left-[529px] z-30 size-9 rounded-full bg-[#f2cf4a]/45">
      <svg className="absolute top-[17px] left-[18px]" width="14" height="20" viewBox="0 0 14 20">
        <path d="M1 1v15l3.500-3.200L7 18.800l2.800-1.200-2.600-5.800H12z" fill="#fff" stroke="#222" strokeWidth="1.100" />
      </svg>
    </div>
  )
}

/* ---------- Windows taskbar ---------- */

function TaskButton({ label, open, active, children }: { label: string; open?: boolean; active?: boolean; children: ReactNode }) {
  return (
    <button
      aria-label={label}
      className={clsx(
        'relative flex h-[50px] items-center justify-center border-b-3 pt-[3px]',
        active ? 'mr-px w-[61px] bg-[#474747]' : 'mr-[6px] ml-[5px] w-[51px]',
        open ? 'border-[#84b4e0]' : 'border-transparent',
      )}
    >
      {children}
      {active && <span className="absolute inset-y-0 right-1 w-px bg-[#2a2a2a]" />}
    </button>
  )
}

function Taskbar() {
  return (
    <footer className="flex h-[101px] shrink-0 bg-[#1e1e1e]">
      <button aria-label="Start" className="flex w-[60px] items-center justify-center">
        <svg width="20" height="20" viewBox="0 0 20 20" fill="#fff">
          <path d="M0 2.800 8.300 1.600v7.900H0zM9.300 1.500 20 0v9.500H9.300zM0 10.500h8.300v7.900L0 17.200zM9.300 10.500H20V20L9.300 18.500z" />
        </svg>
      </button>
      <button aria-label="Task view" className="mr-1 flex w-[60px] items-center justify-center">
        <svg width="20" height="20" viewBox="0 0 20 20" fill="none" stroke="#fff" strokeWidth="1.200">
          <path d="M.6 5.600h12.200v9H.6zM.6 0v3h12.200V0M.6 20v-3h12.200v3M18.500 0v4.500M18.500 9.500V20" />
          <path d="M17 6h3v3h-3z" fill="#fff" stroke="none" />
        </svg>
      </button>
      <TaskButton label="File Explorer" open>
        <svg width="28" height="24" viewBox="0 0 28 24">
          <path d="M0 0h10l2 2.500h15.500V22.500H0z" fill="#e0a526" />
          <path d="M0 5h11l2-2.500h14.500v20H0z" fill="#fcd462" />
          <path d="M5 23V12.500h18V23h-4.500v-5.500h-9V23z" fill="#4a8fc0" />
        </svg>
      </TaskButton>
      <TaskButton label="Edge">
        <svg width="30" height="30" viewBox="0 0 30 30">
          <defs>
            <linearGradient id="edgeTop" x1="0" x2="1" y1="0" y2=".4">
              <stop offset="0" stopColor="#2aa5e0" />
              <stop offset="1" stopColor="#5bd558" />
            </linearGradient>
          </defs>
          <path d="M0 15C0 6 7 0 15 0c9 0 15 6 15 12.500 0 4.500-3.500 7-7.500 7-3.500 0-5-1.500-4-3.500C20 12 16 7.500 10.500 7.500 5 7.500 1 11 0 15z" fill="url(#edgeTop)" />
          <path d="M0 15c1-4.500 5-7.500 10.500-7.500 4 0 7.500 2 8 5.500-4-2-8 1.500-8 5.500 0 4.500 4.500 8 10 7 2.500-.5 4.500-1.500 6-2.500C24 27.500 20 30 15 30 6.500 30 0 23.500 0 15z" fill="#1b78ca" />
          <path d="M8.500 12c-4 4-3.500 12.500 5.500 17.800C6 29 0 23.500 0 15c1.500-3 5-4 8.500-3z" fill="#3398dc" />
          <path d="M10.500 18.500c0 5 5 8.500 10.500 7 2-.5 4-1.500 5.500-2.500-2.500 4-6 6-9.500 6.800-6-1-8.500-7-6.500-11.300z" fill="#14529b" />
        </svg>
      </TaskButton>
      <TaskButton label="Settings tool">
        <svg width="30" height="30" viewBox="0 0 30 30">
          <path d="M0 0h15v15H0z" fill="#3c6f96" />
          <circle cx="15" cy="15" r="14.700" fill="#88a9d6" />
          <circle cx="15" cy="15" r="11" fill="#c6d7f0" />
          <rect x="6" y="8.500" width="5.500" height="13.500" rx="1.500" fill="#2d5a94" />
          <path d="M15 9.500h9M19.500 5v9M15 18.500h9M15 22.500h9" stroke="#2d5a94" strokeWidth="2" />
        </svg>
      </TaskButton>
      <TaskButton label="Chrome">
        <ChromeIcon />
      </TaskButton>
      <TaskButton label="HitPaw">
        <svg width="30" height="30" viewBox="0 0 30 30">
          <path d="M0 0h15v15H0z" fill="#2aa088" />
          <circle cx="15" cy="15" r="14.700" fill="#45c4a5" />
          <circle cx="15" cy="15" r="11" fill="#a9ecd9" />
          <path d="M7 6h4v18H7zM19 6h4v18h-4zM11 10.500l9 4.500-9 4z" fill="#12806c" />
        </svg>
      </TaskButton>
      <TaskButton label="Excel" open active>
        <svg width="30" height="30" viewBox="0 0 30 30">
          <path d="M8 1h21v27H8z" fill="#185c37" />
          <path d="M8 1h11v9H8z" fill="#21a366" />
          <path d="M19 1h10v9H19z" fill="#33c481" />
          <path d="M19 10h10v9H19z" fill="#21a366" />
          <path d="M8 10h11v9H8z" fill="#107c41" />
          <path d="M0 7.500h15v15H0z" fill="#0f703b" />
          <path d="m4.500 11 6 8M10.500 11l-6 8" stroke="#fff" strokeWidth="2" />
        </svg>
      </TaskButton>
      <TaskButton label="Chrome profile" open>
        <ChromeIcon badge />
      </TaskButton>
    </footer>
  )
}

export default function App() {
  return (
    <div className="relative flex h-screen flex-col overflow-hidden bg-[#f1f0ee] font-['Noto_Sans','Open_Sans',sans-serif]">
      <TitleBar />
      <RibbonTabs />
      <Ribbon />
      <FormulaBar />
      <Sheet />
      <SheetTabs />
      <div className="h-[26px] shrink-0 pl-[9px] text-[12px] leading-[26px] text-[#444]">Ready</div>
      <Taskbar />

      <MiniToolbar />
      <ContextMenu />
      <Pointer />
    </div>
  )
}
